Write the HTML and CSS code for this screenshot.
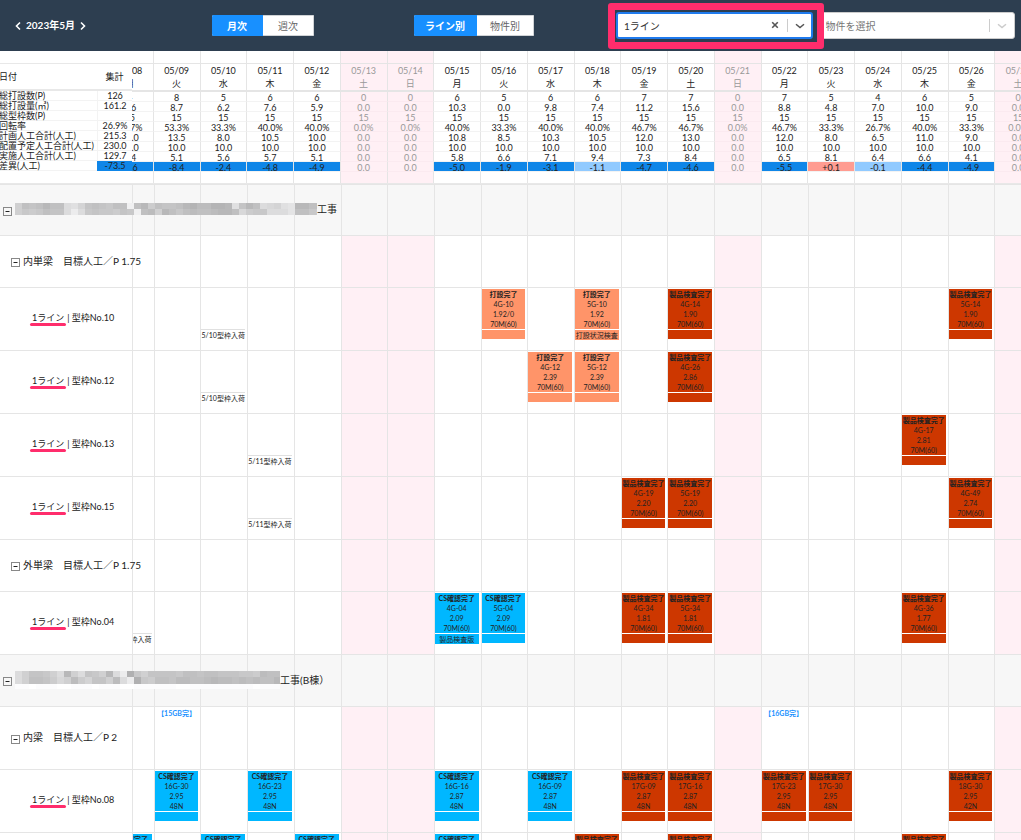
FILE: index.html
```html
<!DOCTYPE html>
<html lang="ja">
<head>
<meta charset="utf-8">
<title>2023年5月 製造計画</title>
<link rel="stylesheet" href="styles.css">
</head>
<body>
<header class="toolbar">
  <nav class="period" aria-label="表示月">
    <button class="period-step" type="button" aria-label="前月"><svg width="6" height="10" viewBox="0 0 6 10"><path d="M5 1.5 1.5 5 5 8.5"/></svg></button>
    <h1 class="period-name">2023年5月</h1>
    <button class="period-step" type="button" aria-label="翌月"><svg width="6" height="10" viewBox="0 0 6 10"><path d="M1 1.5 4.5 5 1 8.5"/></svg></button>
  </nav>
  <div class="toggle toggle-range">
    <button class="toggle-item is-active" type="button">月次</button>
    <button class="toggle-item" type="button">週次</button>
  </div>
  <div class="toggle toggle-group">
    <button class="toggle-item is-active" type="button">ライン別</button>
    <button class="toggle-item" type="button">物件別</button>
  </div>
  <div class="filters">
    <div class="picker picker-focus">
      <select class="picker-input" aria-label="ライン"><option>1ライン</option></select>
      <button class="picker-clear" type="button" aria-label="クリア"><svg width="8" height="8" viewBox="0 0 8 8"><path d="M1.2 1.2 6.8 6.8M6.8 1.2 1.2 6.8"/></svg></button>
      <svg class="picker-arrow" width="10" height="8" viewBox="0 0 10 8"><path d="M1 2.2 5 5.6 9 2.2"/></svg>
    </div>
    <div class="picker picker-empty">
      <select class="picker-input" aria-label="物件"><option>物件を選択</option></select>
      <svg class="picker-arrow" width="10" height="8" viewBox="0 0 10 8"><path d="M1 2.2 5 5.6 9 2.2"/></svg>
    </div>
  </div>
</header>
<section class="summary">
  <table class="totals">
    <thead><tr><th>日付</th><th>集計</th></tr></thead>
    <tbody id="totals"></tbody>
  </table>
  <div class="days-clip"><table class="days" id="days"></table></div>
</section>
<main class="board">
  <table class="plan"><tbody id="plan"></tbody></table>
</main>
<script src="app.js"></script>
</body>
</html>
```

FILE: styles.css
```css
* { box-sizing: border-box; }

body {
  margin: 0;
  height: 100vh;
  display: flex;
  flex-direction: column;
  overflow: hidden;
  background: #fff;
  color: #222;
  font-family: Lato, "Noto Sans CJK JP", sans-serif;
  font-size: 9px;
  line-height: 10px;
}

button, select { font: inherit; color: inherit; }
svg { display: block; fill: none; stroke: currentColor; }
table { border-collapse: separate; border-spacing: 0; display: block; }
thead, tbody { display: block; }
th, td { display: block; padding: 0; font-weight: 400; text-align: center; min-width: 0; }

/* toolbar */
.toolbar {
  flex: none;
  height: 51px;
  display: flex;
  align-items: center;
  padding-right: 6px;
  background: #2d3e50;
  font-size: 10px;
}
.period {
  width: 212px;
  flex: none;
  display: flex;
  align-items: center;
  gap: 5px;
  padding-left: 15px;
  color: #fff;
}
.period-name { margin: 0; font-size: 10px; line-height: 14px; padding-bottom: 2px; font-weight: 700; }
.period-step { border: 0; padding: 0; background: none; }
.period-step svg { stroke-width: 1.6; }
.toggle { display: flex; height: 21px; border-radius: 2px; overflow: hidden; background: #fff; }
.toggle-range { width: 102px; margin-right: 100px; }
.toggle-group { width: 120px; }
.toggle-item { flex: 1 1 auto; border: 1px solid #d0d3d6; border-left: 0; background: #fff; color: #666; padding: 0 12px; }
.toggle-item.is-active { border-color: #1890ff; background: #1890ff; color: #fff; font-weight: 700; padding: 0 10px; }
.toggle-range .toggle-item { flex: 1 1 0; }
.toggle-range .toggle-item.is-active { padding: 0 12px; }
.filters { flex: 1; margin-left: 82px; display: grid; grid-template-columns: 1fr 1fr; gap: 6px; }
.picker { position: relative; color: #555; }
.picker-focus::after {
  content: "";
  position: absolute;
  inset: -9px -11px -10px -8px;
  border: 7px solid #ff2d6c;
  border-radius: 3px;
  pointer-events: none;
  z-index: 2;
}
.picker-input {
  appearance: none;
  display: block;
  width: 100%;
  height: 27px;
  padding: 0 6px;
  border: 1px solid #ccc;
  border-radius: 3px;
  background: #fff;
  color: #333;
  font-size: 10px;
}
.picker-focus .picker-input { border: 2px solid #1f7bee; }
.picker-empty .picker-input { color: #777; }
.picker-clear { position: absolute; right: 34px; top: 9px; border: 0; padding: 0; background: none; }
.picker-clear svg { stroke-width: 1.6; }
.picker-arrow { position: absolute; right: 8px; top: 10px; stroke-width: 1.5; }
.picker-empty .picker-arrow { color: #ccc; }
.picker::before {
  content: "";
  position: absolute;
  right: 25px;
  top: 7px;
  width: 1px;
  height: 13px;
  background: #ccc;
  z-index: 1;
}

/* daily summary */
.summary { flex: none; display: flex; height: 133px; border-bottom: 1px solid #e8e8e8; }
.totals { width: 132px; flex: none; padding-top: 12px; }
.totals tr { display: grid; grid-template-columns: 97px 1fr; }
.totals thead th { height: 28px; line-height: 25px; border-top: 1px solid #e8e8e8; border-bottom: 2px solid #e8e8e8; }
.totals tr > :first-child { text-align: left; margin-left: -1px; white-space: nowrap; }
.totals tbody tr > * { height: 10px; line-height: 9px; border-bottom: 1px solid #f3f3f3; border-left: 1px solid #f3f3f3; }
.totals tbody tr > :first-child { border-left: 0; }
.totals tbody .diff-low { border-color: #0f86e8; }
.days-clip { flex: 1; min-width: 0; overflow: hidden; }
.days { width: calc(100% + 46px); margin-left: -26px; }
.days tr { display: grid; grid-template-columns: repeat(20, minmax(0, 1fr)); }
.days tr > * { height: 10px; line-height: 11px; border-left: 1px solid #e5e5e5; border-bottom: 1px solid #f3f3f3; }
.days .cap > * { height: 13px; border-bottom-color: #e5e5e5; }
.days .date > * { height: 28px; line-height: 13px; border-bottom: 2px solid #e5e5e5; }
.days .foot > * { height: 12px; border-bottom: 0; }
.weekday { display: block; }
.days .off, .plan .off { background: #fff0f5; }
.days .off { color: #999; }
.days tr > .off { border-bottom-color: #fbeaf0; }
.days .date > .off, .days .cap > .off { border-bottom-color: #e5e5e5; }
.diff-low { background: #0f86e8; }
.days .diff-near { background: #91caff; }
.days .diff-high { background: #ff9c91; }

/* plan board */
.board { flex: 1; min-height: 0; overflow: hidden; }
.plan { width: calc(100% + 20px); }
.plan tr { display: grid; grid-template-columns: 107px repeat(20, minmax(0, 1fr)); height: 63px; }
.plan tr.short { height: 52px; }
.plan tr > * { border-left: 1px solid #e5e5e5; border-bottom: 1px solid #e5e5e5; }
.plan td { padding: 1px 2px 0 0; }
.plan tr:first-child > * { border-top: 1px solid #e5e5e5; }
.plan tr > .row-name {
  position: relative;
  z-index: 1;
  width: 133px;
  display: flex;
  align-items: center;
  gap: 3px;
  padding-bottom: 2px;
  border-left: 0;
  border-right: 1px solid #e5e5e5;
  background: #fff;
  white-space: nowrap;
}
.plan .works > * { background: #f7f7f7; }
.plan tr.works > .row-name { padding-left: 3px; background: #f7f7f7; font-size: 10px; }
.plan tr.kind > .row-name { padding-left: 11px; font-size: 10px; }
.plan tr.mold > .row-name { padding-left: 32px; }
.fold { flex: none; border: 0; padding: 4px 0 0; background: none; color: #888; }
.masked { flex: none; stroke: none; margin-right: -3px; }
.line-name { position: relative; }
.line-name::after {
  content: "";
  position: absolute;
  left: -2px;
  right: -2px;
  top: 10px;
  height: 3px;
  border-radius: 2px;
  background: #ff2d6c;
}

.card { font-size: 7px; line-height: 10px; white-space: nowrap; }
.card-body { height: 40px; }
.card-body > * { display: block; height: 10px; }
.card-note { min-height: 9px; margin-top: 1px; }
.card-title, .milestone { font-weight: 700; }
.cast > * { background: #ff9469; }
.inspected > * { background: #cd3700; }
.checked > * { background: #00b7ff; }
.arrival .card-note { border-top: 1px solid #e0e0e0; margin-top: 0; }
.milestone { display: block; font-size: 7px; color: #1890ff; }
```

FILE: app.js
```js
const weekdays = ["月", "火", "水", "木", "金", "土", "日"];
const daysOff = new Set([13, 14, 21, 27]);
const dates = Array.from({ length: 20 }, (_, i) => i + 8);
const two = n => String(n).padStart(2, "0");
const off = d => (daysOff.has(d) ? "off" : "");

const totals = [
  ["総打設数(P)", "126"], ["総打設量(㎥)", "161.2"], ["総型枠数(P)", ""], ["回転率", "26.9%"],
  ["計画人工合計(人工)", "215.3"], ["配置予定人工合計(人工)", "230.0"], ["実施人工合計(人工)", "129.7"], ["差異(人工)", "-73.5"]
];
document.getElementById("totals").innerHTML = totals.map(([name, value], i) =>
  `<tr><th>${name}</th><td class="${i === 7 ? "diff-low" : ""}">${value}</td></tr>`).join("");

const daily = [
  "4 8 5 6 6 0 0 6 5 6 6 7 7 0 7 5 4 6 5 0",
  "5.6 8.7 6.2 7.6 5.9 0.0 0.0 10.3 0.0 9.8 7.4 11.2 15.6 0.0 8.8 4.8 7.0 10.0 9.0 0.0",
  "15 15 15 15 15 15 15 15 15 15 15 15 15 15 15 15 15 15 15 15",
  "26.7% 53.3% 33.3% 40.0% 40.0% 0.0% 0.0% 40.0% 33.3% 40.0% 40.0% 46.7% 46.7% 0.0% 46.7% 33.3% 26.7% 40.0% 33.3% 0.0%",
  "10.0 13.5 8.0 10.5 10.0 0.0 0.0 10.8 8.5 10.3 10.5 12.0 13.0 0.0 12.0 8.0 6.5 11.0 9.0 0.0",
  "10.0 10.0 10.0 10.0 10.0 0.0 0.0 10.0 10.0 10.0 10.0 10.0 10.0 0.0 10.0 10.0 10.0 10.0 10.0 0.0",
  "5.4 5.1 5.6 5.7 5.1 0.0 0.0 5.8 6.6 7.1 9.4 7.3 8.4 0.0 6.5 8.1 6.4 6.6 4.1 0.0",
  "-4.6 -8.4 -2.4 -4.8 -4.9 0.0 0.0 -5.0 -1.9 -3.1 -1.1 -4.7 -4.6 0.0 -5.5 +0.1 -0.1 -4.4 -4.9 0.0"
].map(row => row.split(" "));
const diffClass = v => (v > 0 ? "diff-high" : v >= -1.5 ? "diff-near" : "diff-low");
const blankCells = () => dates.map(d => `<td class="${off(d)}"></td>`).join("");
document.getElementById("days").innerHTML =
  `<thead><tr class="cap">${blankCells()}</tr><tr class="date">` +
  dates.map(d => `<th class="${off(d)}">05/${two(d)}<span class="weekday">${weekdays[(d - 8) % 7]}</span></th>`).join("") +
  "</tr></thead><tbody>" +
  daily.map((row, r) => "<tr>" + row.map((v, i) =>
    `<td class="${off(dates[i]) || (r === 7 ? diffClass(Number(v)) : "")}">${v}</td>`).join("") + "</tr>").join("") +
  `<tr class="foot">${blankCells()}</tr></tbody>`;

const titles = { cast: "打設完了", inspected: "製品検査完了", checked: "CS確認完了" };
const card = (state, lines = [], note = "") =>
  `<div class="card ${state}"><div class="card-body">` +
  (titles[state] ? `<b class="card-title">${titles[state]}</b>` : "") +
  lines.map(l => `<span>${l}</span>`).join("") + `</div><div class="card-note">${note}</div></div>`;
const cast = (no, v, note) => card("cast", [no, v, "70M(60)"], note);
const insp = (no, v, spec = "70M(60)") => card("inspected", [no, v, spec]);
const chk = (no, v, spec = "70M(60)", note) => card("checked", [no, v, spec], note);
const arrival = date => card("arrival", [], date + "型枠入荷");
const milestone = text => `<b class="milestone">【${text}】</b>`;

/* Masked names: one letter per tile, a = darkest grey */
const masked = (rows, heights, width) => {
  let y = 0, out = "";
  rows.forEach((row, r) => {
    [...row].forEach((c, i) => {
      const v = Math.min(255, 172 + (c.charCodeAt(0) - 97) * 4);
      out += `<rect x="${i * 7}" y="${y}" width="7" height="${heights[r]}" fill="rgb(${v},${v},${v + 1})"/>`;
    });
    y += heights[r];
  });
  return `<svg class="masked" width="${width}" height="${y}" shape-rendering="crispEdges">${out}</svg>`;
};
const maskA = masked([
  "jfgfdffmnkgfghffrfdifggfdceeccdngdfmlknoddff",
  "jhihfggmqmhghhighrfejdfhfeffeddflihhmmmoffhi"
], [6, 6], 302);
const maskB = masked([
  "mjgghjmdjmghjdmqbhjgggghffgffggghhieffggfhg",
  "mjffgiljeikggjemqbhiffgeeffedeefefeffddeedf",
  "uuvuuuvvuuuvuuuvvuuuuuuvvuuuuuuuuuvuuuuuuuu"
], [6, 7, 5], 265);

const plan = [
  ["works short", maskA + "工事", {}],
  ["kind short", "内単梁　目標人工／P 1.75", {}],
  ["mold", "型枠No.10", { 10: arrival("5/10"), 16: cast("4G-10", "1.92/0"), 18: cast("5G-10", "1.92", "打設状況検査"), 20: insp("4G-14", "1.90"), 26: insp("5G-14", "1.90") }],
  ["mold", "型枠No.12", { 10: arrival("5/10"), 17: cast("4G-12", "2.39"), 18: cast("5G-12", "2.39"), 20: insp("4G-26", "2.86") }],
  ["mold", "型枠No.13", { 11: arrival("5/11"), 25: insp("4G-17", "2.81") }],
  ["mold", "型枠No.15", { 11: arrival("5/11"), 19: insp("4G-19", "2.20"), 20: insp("5G-19", "2.20"), 26: insp("4G-49", "2.74") }],
  ["kind short", "外単梁　目標人工／P 1.75", {}],
  ["mold", "型枠No.04", { 8: arrival("5/08"), 15: chk("4G-04", "2.09", "70M(60)", "製品検査版"), 16: chk("5G-04", "2.09"), 19: insp("4G-34", "1.81"), 20: insp("5G-34", "1.81"), 25: insp("4G-36", "1.77") }],
  ["works short", maskB + "工事(B棟）", {}],
  ["kind", "内梁　目標人工／P 2", { 9: milestone("15GB完"), 22: milestone("16GB完") }],
  ["mold", "型枠No.08", { 9: chk("16G-30", "2.95", "48N"), 11: chk("16G-23", "2.95", "48N"), 15: chk("16G-16", "2.87", "48N"), 17: chk("16G-09", "2.87", "48N"), 19: insp("17G-09", "2.87", "48N"), 20: insp("17G-16", "2.87", "48N"), 22: insp("17G-23", "2.95", "48N"), 23: insp("17G-30", "2.95", "48N"), 26: insp("18G-30", "2.95", "42N") }],
  ["mold", "", { 8: card("checked"), 10: card("checked"), 12: card("checked"), 15: card("checked"), 18: card("inspected"), 20: card("inspected"), 25: card("inspected") }]
];
const fold = '<button class="fold" type="button" aria-label="折りたたむ"><svg width="9" height="9" viewBox="0 0 9 9"><rect x=".5" y=".5" width="8" height="8"/><path d="M2.5 4.5h4" stroke="#222"/></svg></button>';
const rowName = (kind, name) => {
  if (!kind.startsWith("mold")) return fold + name;
  return name && `<span class="line-name">1ライン</span><span>| ${name}</span>`;
};
document.getElementById("plan").innerHTML = plan.map(([kind, name, events]) =>
  `<tr class="${kind}"><th class="row-name">${rowName(kind, name)}</th>` +
  dates.map(d => `<td class="${off(d)}">${events[d] || ""}</td>`).join("") + "</tr>").join("");
```
